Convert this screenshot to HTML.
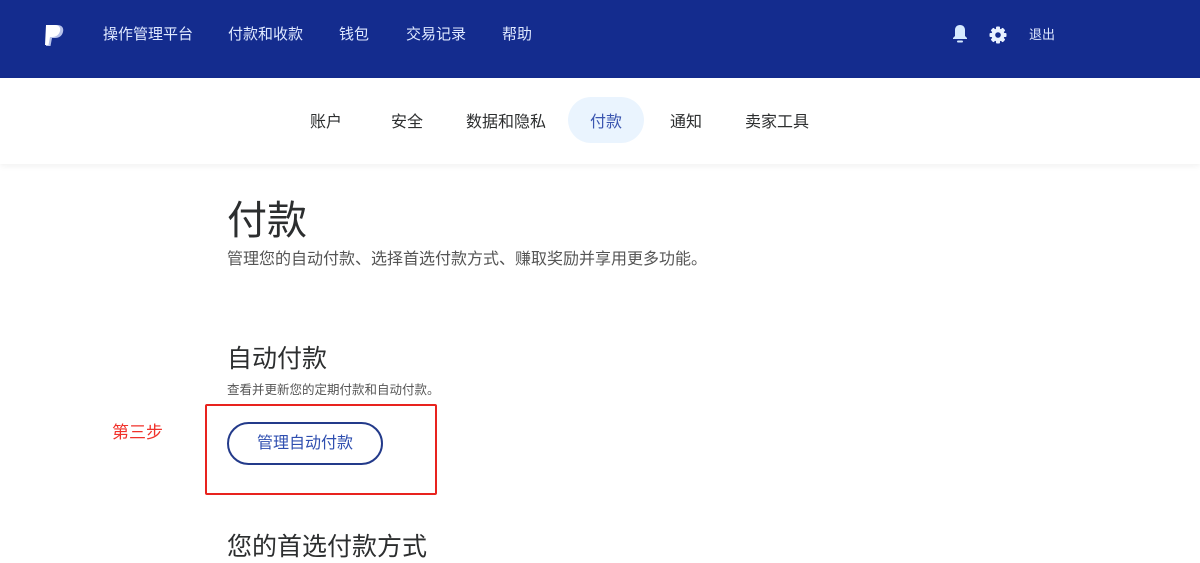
<!DOCTYPE html>
<html><head><meta charset="utf-8"><style>
*{margin:0;padding:0;box-sizing:border-box}
body{width:1200px;height:557px;overflow:hidden;background:#fff;font-family:"Liberation Sans","Noto Sans CJK SC",sans-serif;position:relative}
.top{position:absolute;left:0;top:0;width:1200px;height:78px;background:#142c8e}
.top .n{position:absolute;top:25px;color:#dfe9ff;font-size:15px;line-height:20px}
.sub{position:absolute;left:0;top:78px;width:1200px;height:86px;background:#fff;box-shadow:0 2px 6px rgba(0,0,0,.06)}
.sub .t{position:absolute;top:34px;font-size:16px;color:#2c2e2f;line-height:22px}
.pill{position:absolute;left:568px;top:19px;width:76px;height:46px;border-radius:23px;background:#eaf4fe}
.a{position:absolute;color:#2c2e2f}
</style></head><body>
<div class="top">
<svg style="position:absolute;left:43px;top:24px" width="24" height="24" viewBox="0 0 24 24"><path d="M5 1h9c5 0 7 3 6 7-1 4-4 6-8 6h-3l-1.5 8H3z" fill="#b7c2ea"/><path d="M3 1h9c4 0 6 3 5 6-1 4-4 6-8 6H7l-1.5 8H2z" fill="#fff"/></svg>
<span class="n" style="left:103px">操作管理平台</span>
<span class="n" style="left:228px">付款和收款</span>
<span class="n" style="left:339px">钱包</span>
<span class="n" style="left:406px">交易记录</span>
<span class="n" style="left:502px">帮助</span>
<svg style="position:absolute;left:951px;top:24px" width="18" height="20" viewBox="0 0 18 20"><path d="M9 1c-3 0-5 2-5 5v6l-2 2v1h14v-1l-2-2V6c0-3-2-5-5-5z" fill="#d6eaff"/><rect x="6" y="16.5" width="6" height="2" rx="1" fill="#d6eaff"/></svg>
<svg style="position:absolute;left:989px;top:26px" width="18" height="18" viewBox="0 0 18 18"><g fill="#e8f1ff"><circle cx="9" cy="9" r="6.5"/><rect x="7" y="0.5" width="4" height="17" rx="1"/><rect x="0.5" y="7" width="17" height="4" rx="1"/><rect x="7" y="0.5" width="4" height="17" rx="1" transform="rotate(45 9 9)"/><rect x="7" y="0.5" width="4" height="17" rx="1" transform="rotate(-45 9 9)"/></g><circle cx="9" cy="9" r="2.8" fill="#142c8e"/></svg>
<span class="n" style="left:1029px;font-size:13px">退出</span>
</div>
<div class="sub">
<div class="pill"></div>
<span class="t" style="left:310px">账户</span>
<span class="t" style="left:391px">安全</span>
<span class="t" style="left:466px">数据和隐私</span>
<span class="t" style="left:590px;color:#3b56b0">付款</span>
<span class="t" style="left:670px">通知</span>
<span class="t" style="left:745px">卖家工具</span>
</div>
<div class="a" style="left:227px;top:196px;font-size:40px;line-height:50px">付款</div>
<div class="a" style="left:227px;top:250px;font-size:16px;color:#555;line-height:20px">管理您的自动付款、选择首选付款方式、赚取奖励并享用更多功能。</div>
<div class="a" style="left:227px;top:343px;font-size:25px;line-height:32px">自动付款</div>
<div class="a" style="left:227px;top:382px;font-size:12.5px;color:#555;line-height:16px">查看并更新您的定期付款和自动付款。</div>
<div style="position:absolute;left:205px;top:404px;width:232px;height:91px;border:2px solid #e8231e;border-radius:2px"></div>
<div class="a" style="left:112px;top:422px;font-size:17px;color:#f0312a;line-height:22px">第三步</div>
<div style="position:absolute;left:227px;top:422px;width:156px;height:43px;border:2px solid #233a8a;border-radius:22px;color:#2f4fb0;font-size:16px;text-align:center;line-height:39px">管理自动付款</div>
<div class="a" style="left:227px;top:531px;font-size:25px;line-height:32px">您的首选付款方式</div>
</body></html>
